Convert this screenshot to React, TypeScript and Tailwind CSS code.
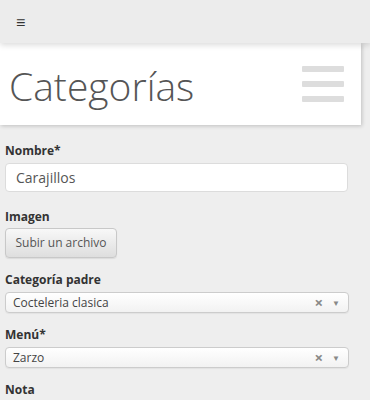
export default function App() {
  const font = { fontFamily: '"Open Sans", "Noto Sans", sans-serif' };
  return (
    <div className="h-[400px] w-[370px] overflow-hidden bg-[#eeeeee]" style={font}>
      <header className="relative z-10 flex h-[43px] items-center bg-[#ececec] px-4 shadow-[0_2px_6px_rgba(0,0,0,0.15)]">
        <span className="text-[16px] leading-none text-[#333]">≡</span>
      </header>
      <div className="mr-[9px] flex h-[82px] items-center justify-between bg-white pl-[9px] pr-[17px] shadow-[1px_1px_4px_rgba(0,0,0,0.2)]">
        <h1 className="mt-[2px] text-[39px] font-light leading-none text-[#555]">Categorías</h1>
        <div className="flex flex-col gap-[9px]">
          <span className="block h-[6px] w-[42px] rounded-[1px] bg-[#dddddd]" />
          <span className="block h-[6px] w-[42px] rounded-[1px] bg-[#dddddd]" />
          <span className="block h-[6px] w-[42px] rounded-[1px] bg-[#dddddd]" />
        </div>
      </div>
      <form className="px-[5px] pt-[18px] text-[#333]">
        <label className="block text-[12px] font-bold leading-[16px]">Nombre*</label>
        <div className="mt-[4px] flex h-[29px] w-[343px] items-center rounded-[4px] border border-[#dcdcdc] bg-white px-[10px] text-[14px] text-[#555]">
          Carajillos
        </div>
        <label className="mt-[17px] block text-[12px] font-bold leading-[16px]">Imagen</label>
        <div className="mt-[3px] flex h-[30px] w-[112px] items-center justify-center rounded-[4px] border border-[#c8c8c8] bg-gradient-to-b from-[#f8f8f8] to-[#dedede] text-[12px] text-[#555] shadow-[0_1px_1px_rgba(0,0,0,0.08)]">
          Subir un archivo
        </div>
        <label className="mt-[14px] block text-[12px] font-bold leading-[16px]">Categoría padre</label>
        <Select value="Cocteleria clasica" />
        <label className="mt-[14px] block text-[12px] font-bold leading-[16px]">Menú*</label>
        <Select value="Zarzo" />
        <label className="mt-[14px] block text-[12px] font-bold leading-[16px]">Nota</label>
      </form>
    </div>
  );
}

function Select({ value }: { value: string }) {
  return (
    <div className="mt-[4px] flex h-[21px] w-[344px] items-center justify-between rounded-[4px] border border-[#cccccc] bg-gradient-to-b from-white to-[#f2f2f2] pl-[7px] pr-[8px] text-[12px] text-[#444] shadow-[0_1px_1px_rgba(0,0,0,0.05)]">
      <span>{value}</span>
      <span className="flex items-center gap-[9px] text-[#888]">
        <span className="text-[15px] font-bold leading-none">×</span>
        <span className="text-[8px] leading-none">▼</span>
      </span>
    </div>
  );
}
